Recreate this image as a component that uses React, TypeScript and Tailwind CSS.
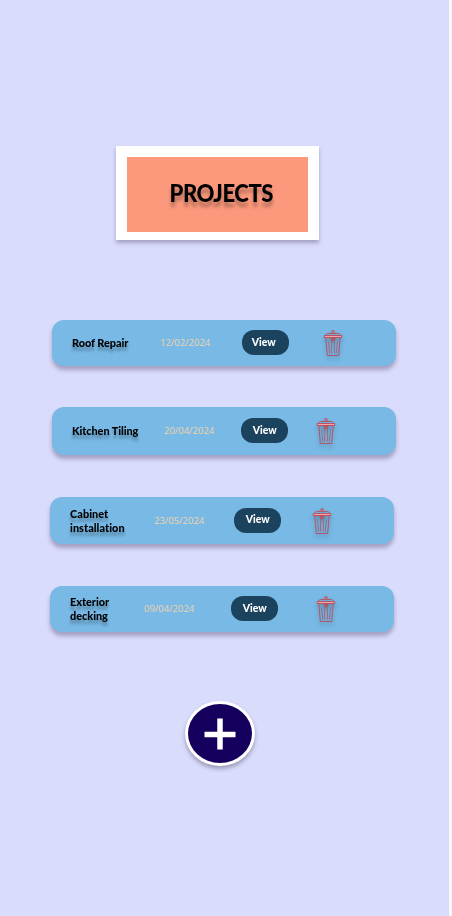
import React from "react";

interface Project {
  title: string[];
  date: string;
  card: string;
  titleBox: string;
  titleText: string;
  dateBox: string;
  button: string;
  label: string;
  icon: string;
}

const projects: Project[] = [
  {
    title: ["Roof Repair"],
    date: "12/02/2024",
    card: "ml-[52px] mt-[80px] h-[46px]",
    titleBox: "w-[88px] mt-[16px]",
    titleText: "tracking-[-0.05px]",
    dateBox: "w-[82px] mt-[15px]",
    button: "mt-[10px]",
    label: "pr-[3px] pb-px",
    icon: "ml-[33.5px] mt-[10px]",
  },
  {
    title: ["Kitchen Tiling"],
    date: "20/04/2024",
    card: "ml-[52px] mt-[41px] h-[48px]",
    titleBox: "w-[92px] mt-[17px]",
    titleText: "tracking-[-0.08px]",
    dateBox: "w-[77px] mt-[16px]",
    button: "mt-[11px]",
    label: "pl-px",
    icon: "ml-[28px] mt-[11px]",
  },
  {
    title: ["Cabinet", "installation"],
    date: "23/05/2024",
    card: "ml-[50px] mt-[42px] h-[47px]",
    titleBox: "w-[84px] mt-[10px]",
    titleText: "tracking-[0.05px]",
    dateBox: "w-[80px] mt-[16px]",
    button: "mt-[11px]",
    label: "pb-[2px] pl-px",
    icon: "ml-[31px] mt-[11px]",
  },
  {
    title: ["Exterior", "decking"],
    date: "09/04/2024",
    card: "ml-[50px] mt-[42px] h-[46px]",
    titleBox: "w-[74px] mt-[9px]",
    titleText: "tracking-[-0.05px]",
    dateBox: "w-[87px] mt-[15px]",
    button: "mt-[10px]",
    label: "pl-px",
    icon: "ml-[38px] mt-[10px]",
  },
];

function TrashIcon({ className }: { className: string }) {
  return (
    <svg
      viewBox="0 0 20 27"
      fill="none"
      stroke="#b94a59"
      strokeWidth=".9"
      strokeLinejoin="round"
      className={`h-[27px] w-5 shrink-0 drop-shadow-[0_3px_2px_rgba(0,0,0,0.25)] ${className}`}
    >
      <path d="M9 3V.8h2V3" fill="#ee9295" />
      <path d="M2.500 5.500C2.800 4 4 3.400 6 3.400h8c2 0 3.200.600 3.500 2.100" />
      <path d="M1.300 5.500h17.400v2H1.300z" fill="#f4a6a4" />
      <path d="M2.800 7.600 4.300 25.500h11.400L17.200 7.600" />
      <path d="M8 8.200h4v1.500l-1 .8H9l-1-.8z" fill="#ad6378" />
      <path
        d="M5.500 11.500l1.200 12M14.500 11.500l-1.200 12M8.600 11v12.500M11.400 11v12.500"
        strokeWidth=".7"
      />
    </svg>
  );
}

function ProjectCard({ project }: { project: Project }) {
  return (
    <article
      className={`flex w-[343.5px] shrink-0 items-start rounded-[12px] bg-[#78b9e6] pl-5 shadow-[0_4px_4px_rgba(80,70,110,0.4)] ${project.card}`}
    >
      <h2
        className={`shrink-0 origin-left scale-x-[0.91] font-['Lato','Noto_Sans',sans-serif] text-[12px] leading-[14px] font-black text-black [text-shadow:0_4px_3px_rgba(0,0,0,0.3)] ${project.titleBox} ${project.titleText}`}
      >
        {project.title.map((line) => (
          <span key={line} className="block whitespace-nowrap">
            {line}
          </span>
        ))}
      </h2>
      <time
        className={`shrink-0 font-['Open_Sans',sans-serif] text-[9.5px] leading-4 tracking-[-0.02px] text-[#f2d4a8] ${project.dateBox}`}
      >
        {project.date}
      </time>
      <button
        className={`flex h-[25.5px] w-[47px] shrink-0 items-center justify-center rounded-[12px] bg-[#1c435e] font-['Lato','Noto_Sans',sans-serif] text-[12px] leading-none font-black text-white ${project.button} ${project.label}`}
      >
        <span className="scale-x-[0.87]">View</span>
      </button>
      <TrashIcon className={project.icon} />
    </article>
  );
}

export default function App() {
  return (
    <div className="h-[916px] w-[452px] overflow-hidden bg-[#f8f8f9]">
      <main className="flex h-full w-[449px] flex-col items-start bg-[#dadcfc]">
        <header className="mt-[146px] ml-[115.5px] h-[93.5px] w-[203.5px] shrink-0 bg-white pt-[11px] pl-[11px] shadow-[0_3px_4px_rgba(80,75,115,0.4)]">
          <div className="flex h-[75px] w-[181.5px] items-center justify-center bg-[#fc997c] pb-[4px] pl-[8px]">
            <h1 className="scale-x-[0.92] font-['Lato','Noto_Sans',sans-serif] text-[24px] leading-none font-black tracking-[-0.5px] text-black [text-shadow:0_5px_4px_rgba(0,0,0,0.3)]">
              PROJECTS
            </h1>
          </div>
        </header>
        {projects.map((project) => (
          <ProjectCard key={project.date} project={project} />
        ))}
        <button
          aria-label="Add project"
          className="mt-[69px] ml-[185px] flex h-[65px] w-[70px] shrink-0 items-center justify-center rounded-[50%] border-[3.5px] border-white bg-[#16005d] pt-px shadow-[0_3px_4px_rgba(60,60,80,0.4)]"
        >
          <svg viewBox="0 0 32 32" className="h-8 w-8" stroke="white" strokeWidth="5.500">
            <path d="M.5 16.500h31M16 .5v31" />
          </svg>
        </button>
      </main>
    </div>
  );
}
